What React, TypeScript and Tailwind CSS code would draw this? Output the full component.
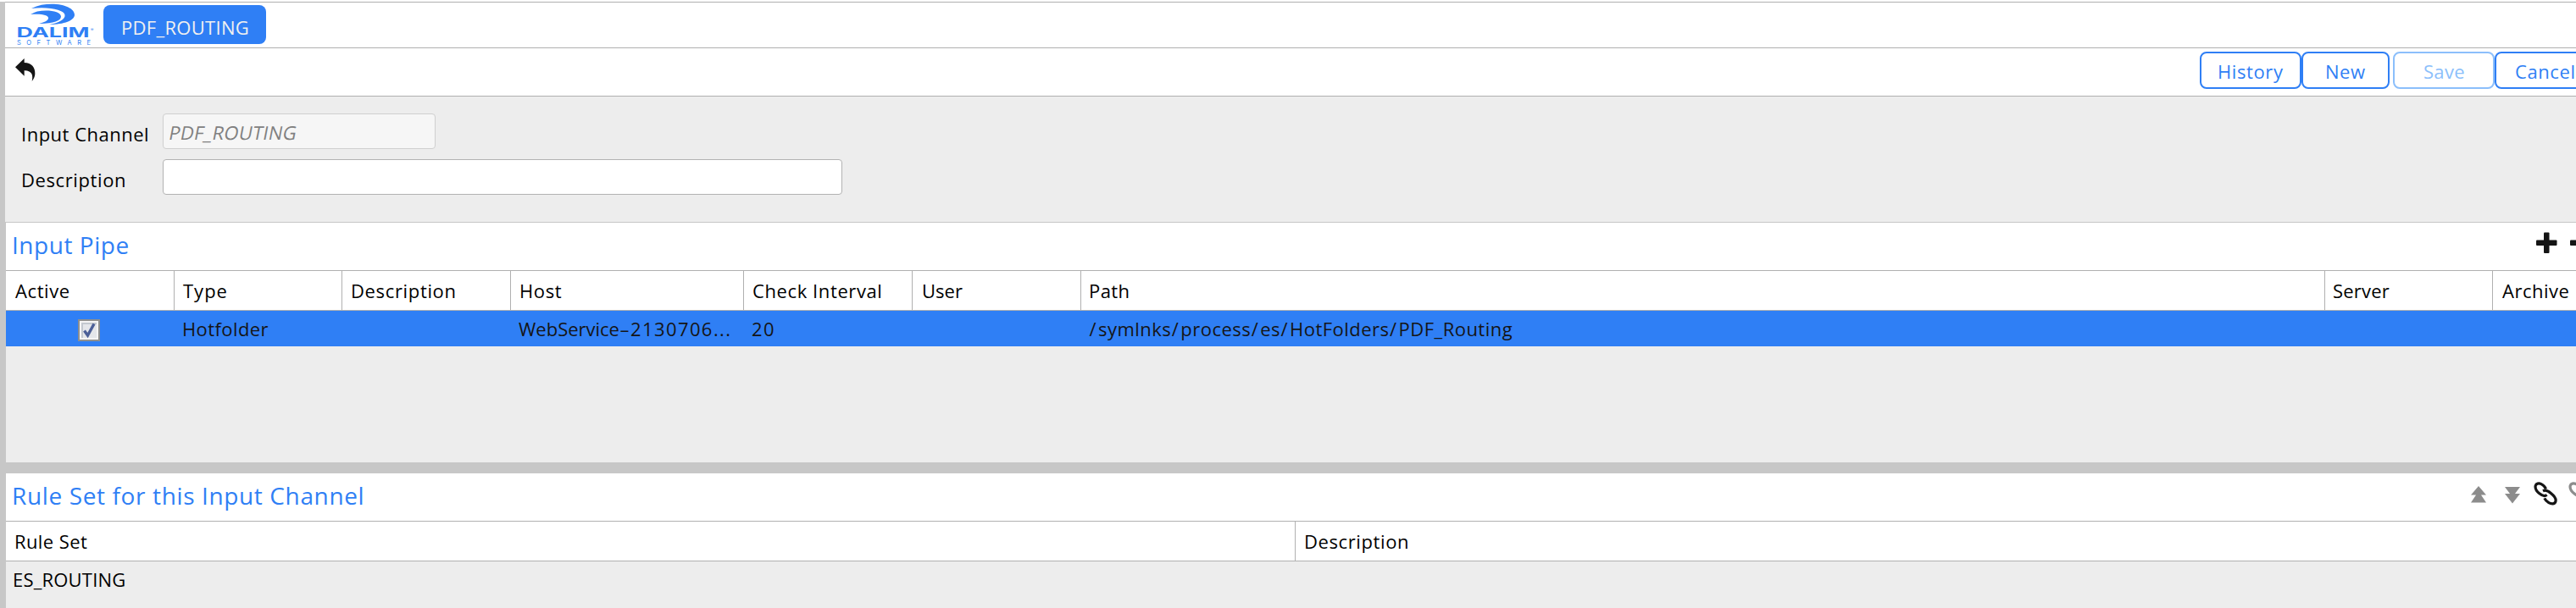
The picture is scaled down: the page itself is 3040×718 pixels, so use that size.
import type { ReactNode } from 'react';

const columns = [
  { label: 'Active', box: 'w-[199px] pl-[11px]', text: 'tracking-[0.6px]' },
  { label: 'Type', box: 'w-[198px] pl-[10px]', text: 'tracking-[1px]' },
  { label: 'Description', box: 'w-[199px] pl-[10px]', text: 'tracking-[0.65px]' },
  { label: 'Host', box: 'w-[275px] pl-[10px]', text: 'tracking-[0.6px]' },
  { label: 'Check Interval', box: 'w-[199px] pl-[10px]', text: 'tracking-[0.6px]' },
  { label: 'User', box: 'w-[199px] pl-[11px]', text: 'tracking-[0px]' },
  { label: 'Path', box: 'w-[1468px] pl-[9px]', text: 'tracking-[0.4px]' },
  { label: 'Server', box: 'w-[198px] pl-[9px]', text: 'tracking-[0.2px]' },
];

const pathParts = ['symlnks', 'process', 'es', 'HotFolders', 'PDF_Routing'];

function Logo() {
  return (
    <svg width="94" height="50" viewBox="0 0 94 50" className="mt-[1px] ml-[13px] shrink-0">
      <g fill="#2f7ff5">
        <path d="M18 6C26 2 34 0.800 42 0.800C58 0.800 69 6.500 69 13.500C69 20 57 25 39 25C50 23 58.500 19 57.500 13.500C56.500 8 40 3.500 18 6Z" />
        <path d="M25 9.500C38 7 53 9.500 53 15.500C53 20.500 45 23.800 27 24C34 22 38.500 20 38 17C37.500 14 31 12 17 13C20 11.500 22 10.200 25 9.500Z" />
      </g>
      <text x="0.500" y="40" fill="#2f7ff5" fontFamily="Inter, sans-serif" fontWeight="700" fontSize="15.500" textLength="86" lengthAdjust="spacingAndGlyphs">DALIM</text>
      <text x="88" y="33" fill="#2f7ff5" fontFamily="Inter, sans-serif" fontSize="5">®</text>
      <text x="1" y="48.500" fill="#2f7ff5" fontFamily="Inter, sans-serif" fontSize="7.500" textLength="87">SOFTWARE</text>
    </svg>
  );
}

function Button({ box, text, children, disabled }: { box: string; text: string; children: ReactNode; disabled?: boolean }) {
  return (
    <button
      disabled={disabled}
      className={`h-[44px] shrink-0 rounded-[8px] border-2 bg-white pt-[2px] text-left leading-[30px] ${
        disabled ? 'border-[#8cbffb] text-[#8cbffb]' : 'border-[#2f7ff5] text-[#2f7ff5]'
      } ${box} ${text}`}
    >
      {children}
    </button>
  );
}

function ChainIcon({ className }: { className: string }) {
  return (
    <svg width="28" height="28" viewBox="0 0 28 28" className={`shrink-0 ${className}`} fill="none" stroke="currentColor" strokeWidth="3.200">
      <path d="M14.500 8.500C13.500 6 11.500 3.800 9 2.600C6 1.200 2.800 2 2.200 4.600C1.600 7.500 3.600 11.200 6.800 13.800C10 16.400 13.500 17.200 15.600 15.400" />
      <path d="M11 10.800C13.400 9.600 17 10.600 20.400 13.400C24.400 16.600 26.800 20.800 25.800 23.600C24.800 26.400 21 26.400 17.800 24.600C15.400 23.200 13.600 21.200 12.800 19.400" />
    </svg>
  );
}

function Checkbox() {
  return (
    <svg width="26" height="26" viewBox="0 0 26 26">
      <rect x="0" y="0" width="26" height="26" fill="#8e8f8f" />
      <rect x="2" y="2" width="22" height="22" fill="#f4f4f4" />
      <rect x="4" y="4" width="18" height="18" fill="#c3c8cf" />
      <rect x="6" y="6" width="16" height="16" fill="#e4e6ea" />
      <path d="M7.500 13.500L11.500 19L19 5.500" fill="none" stroke="#4b5f97" strokeWidth="3.400" />
    </svg>
  );
}

export default function App() {
  return (
    <div className="flex h-[718px] w-[3040px] flex-col overflow-hidden bg-white pt-[2px] font-['Open_Sans',sans-serif] text-[22px] leading-[30px] whitespace-nowrap text-black">
      <div className="flex h-[260px] shrink-0 flex-col border-l-[6px] border-[#c7c7c7]">
        <header className="flex h-[54px] shrink-0 border-t border-[#b0b0b0]">
          <Logo />
          <div className="mt-[3px] ml-[9px] h-[46px] w-[192px] rounded-[8px] bg-[#2f7ff5] pt-[11px] pl-[21px] tracking-[0.3px] text-[#f0f0f0]">PDF_ROUTING</div>
        </header>

        <div className="flex h-[57px] shrink-0 border-t border-[#b0b0b0]">
          <svg width="26" height="28" viewBox="54 207 78 84" className="mt-[12px] ml-[12px] shrink-0">
            <path fill="#151515" d="M54 238L86 207V222C112 223 125 238 124 262C123.500 273 119 281 113 288C117 270 116 250 86 250V269Z" />
          </svg>
          <div className="ml-[2552px] flex pt-[4px]">
            <Button box="w-[120px] pl-[19px]" text="tracking-[0.6px]">History</Button>
            <Button box="w-[104px] pl-[26px]" text="tracking-[0.5px]">New</Button>
            <Button box="ml-[4px] w-[120px] pl-[34px]" text="tracking-[0.3px]" disabled>Save</Button>
            <Button box="w-[120px] pl-[22px]" text="tracking-[0.6px]">Cancel</Button>
          </div>
        </div>

        <div className="flex h-[149px] shrink-0 flex-col gap-[12px] border-t border-[#b0b0b0] bg-[#ededed] pt-[20px] pl-[19px]">
          <div className="flex h-[42px]">
            <label className="w-[167px] pt-[9px] tracking-[0.5px]">Input Channel</label>
            <div className="w-[322px] rounded-[4px] border border-[#cfcfcf] bg-[#f6f6f6] pt-[6px] pl-[7px] text-[#808080]">
              <span className="inline-block -skew-x-[11deg] tracking-[0.25px]">PDF_ROUTING</span>
            </div>
          </div>
          <div className="flex h-[42px]">
            <label className="w-[167px] pt-[9px] tracking-[0.6px]">Description</label>
            <div className="w-[802px] rounded-[4px] border border-[#b2b2b2] bg-white" />
          </div>
        </div>
      </div>

      <div className="flex min-h-0 flex-1 flex-col border-l-[7px] border-[#c7c7c7]">
        <section className="flex h-[284px] shrink-0 flex-col">
          <div className="flex h-[57px] shrink-0 border-t border-[#c7c7c7]">
            <h2 className="w-[2986px] shrink-0 pt-[7px] pl-[7px] text-[28px] leading-[38px] tracking-[0.55px] text-[#2f7ff5]">Input Pipe</h2>
            <svg width="47" height="26" viewBox="0 0 47 26" fill="#151515" className="mt-[11px] shrink-0">
              <rect x="9" y="0.500" width="6.500" height="24.500" rx="1" />
              <rect x="0" y="9.500" width="24.500" height="6.500" rx="1" />
              <rect x="40" y="9.500" width="24" height="6.500" rx="1" />
            </svg>
          </div>
          <div className="flex h-[48px] shrink-0 border-y border-[#b0b0b0]">
            {columns.map((c) => (
              <div key={c.label} className={`shrink-0 border-r border-[#b0b0b0] pt-[8px] ${c.box} ${c.text}`}>{c.label}</div>
            ))}
            <div className="shrink-0 pt-[8px] pl-[11px] tracking-[0.5px]">Archive</div>
          </div>
          <div className="flex h-[42px] shrink-0 bg-[#2f7ff5] pt-[6px] text-[#151515]">
            <div className="w-[208px] shrink-0 pt-[4px] pl-[85px]"><Checkbox /></div>
            <div className="w-[397px] shrink-0 tracking-[0.4px]">Hotfolder</div>
            <div className="flex w-[275px] shrink-0">
              <span className="w-[118px] tracking-[0px]">WebService</span>
              <span className="w-[14px] scale-x-[1.7] text-center">-</span>
              <span className="w-[98px] tracking-[1.4px]">2130706</span>
              <span className="tracking-[1.3px]">...</span>
            </div>
            <div className="w-[398px] shrink-0 tracking-[1.4px]">20</div>
            <div className="shrink-0 tracking-[0.47px]">
              {pathParts.map((p) => (
                <span key={p}><span className="mr-[2px] ml-[0.5px]">/</span>{p}</span>
              ))}
            </div>
          </div>
          <div className="flex-1 bg-[#ededed]" />
        </section>

        <div className="h-[13px] shrink-0 bg-[#c7c7c7]" />

        <section className="flex min-h-0 flex-1 flex-col">
          <div className="flex h-[56px] shrink-0">
            <h2 className="w-[2908px] shrink-0 pt-[7px] pl-[7px] text-[28px] leading-[38px] tracking-[0.63px] text-[#2f7ff5]">Rule Set for this Input Channel</h2>
            <svg width="20" height="20" viewBox="0 0 20 20" fill="#8c8c8c" className="mt-[15px] shrink-0">
              <path d="M10 0L19 10.500H13L19 19.500H1L7 10.500H1Z" />
            </svg>
            <svg width="20" height="20" viewBox="0 0 20 20" fill="#8c8c8c" className="mt-[16px] ml-[20px] shrink-0">
              <path d="M1 0H19L13 8H19L10 19.500L1 8H7Z" />
            </svg>
            <ChainIcon className="mt-[10px] ml-[15px] text-[#151515]" />
            <ChainIcon className="mt-[10px] ml-[13px] text-[#8c8c8c]" />
          </div>
          <div className="flex h-[48px] shrink-0 border-y border-[#b0b0b0]">
            <div className="w-[1522px] shrink-0 border-r border-[#b0b0b0] pt-[8px] pl-[10px] tracking-[0.4px]">Rule Set</div>
            <div className="pt-[8px] pl-[10px] tracking-[0.6px]">Description</div>
          </div>
          <div className="flex-1 bg-[#ededed] pt-[6px] pl-[8px] tracking-[0.2px]">ES_ROUTING</div>
        </section>
      </div>
    </div>
  );
}
